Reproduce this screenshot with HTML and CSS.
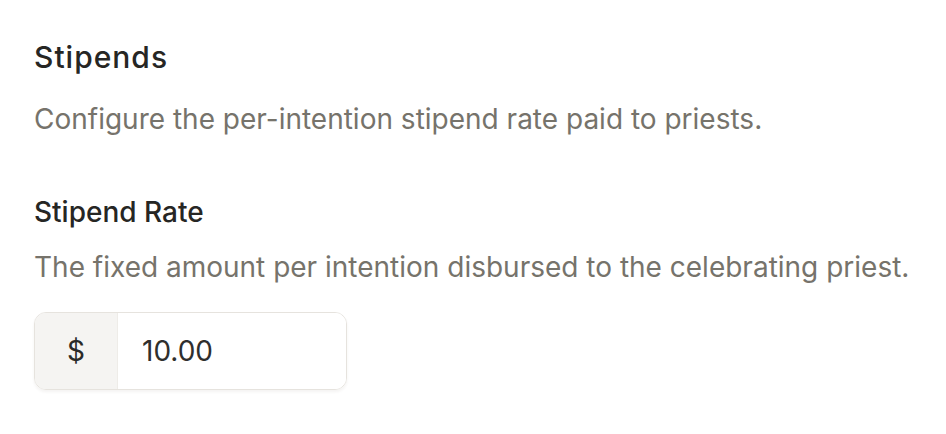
FILE: index.html
```html
<!DOCTYPE html>
<html lang="en">
<head>
<meta charset="utf-8">
<link rel="stylesheet" href="styles.css">
</head>
<body>
<section class="panel">
  <h2 class="title">Stipends</h2>
  <p class="desc">Configure the per-intention stipend rate paid to priests.</p>
  <div class="field">
    <label class="label" for="rate">Stipend Rate</label>
    <p class="desc">The fixed amount per intention disbursed to the celebrating priest.</p>
    <div class="input-group">
      <span class="prefix">$</span>
      <input id="rate" class="input" type="text" value="10.00">
    </div>
  </div>
</section>
</body>
</html>
```

FILE: styles.css
```css
html, body {
  margin: 0;
  background: #ffffff;
}
body {
  font-family: Inter, "Noto Sans", sans-serif;
  color: #2a2a28;
}
.panel {
  padding: 37px 34px;
  display: flex;
  flex-direction: column;
}
.title {
  margin: 0;
  font-size: 30px;
  font-weight: 500;
  line-height: 40px;
  letter-spacing: 1px;
  color: #262624;
}
.desc {
  margin: 0;
  font-size: 28px;
  line-height: 40px;
  color: #76736b;
}
.panel > .desc {
  margin-top: 22px;
}
.field {
  margin-top: 53px;
  display: flex;
  flex-direction: column;
}
.label {
  font-size: 28px;
  font-weight: 500;
  line-height: 40px;
  color: #262624;
}
.field .desc {
  margin-top: 15px;
}
.input-group {
  margin-top: 25px;
  display: flex;
  width: 313px;
  height: 78px;
  box-sizing: border-box;
  border: 1.5px solid #e6e3de;
  border-radius: 12px;
  overflow: hidden;
  box-shadow: 0 2px 3px rgba(60, 50, 30, 0.06);
}
.prefix {
  width: 82px;
  flex: none;
  display: flex;
  align-items: center;
  justify-content: center;
  background: #f5f4f2;
  border-right: 1px solid #eeece8;
  font-size: 28px;
  color: #2a2a28;
}
.input {
  flex: 1;
  min-width: 0;
  border: none;
  outline: none;
  padding: 0 0 0 24px;
  font-family: inherit;
  font-size: 28px;
  color: #2f2f2d;
  background: #ffffff;
}
```
